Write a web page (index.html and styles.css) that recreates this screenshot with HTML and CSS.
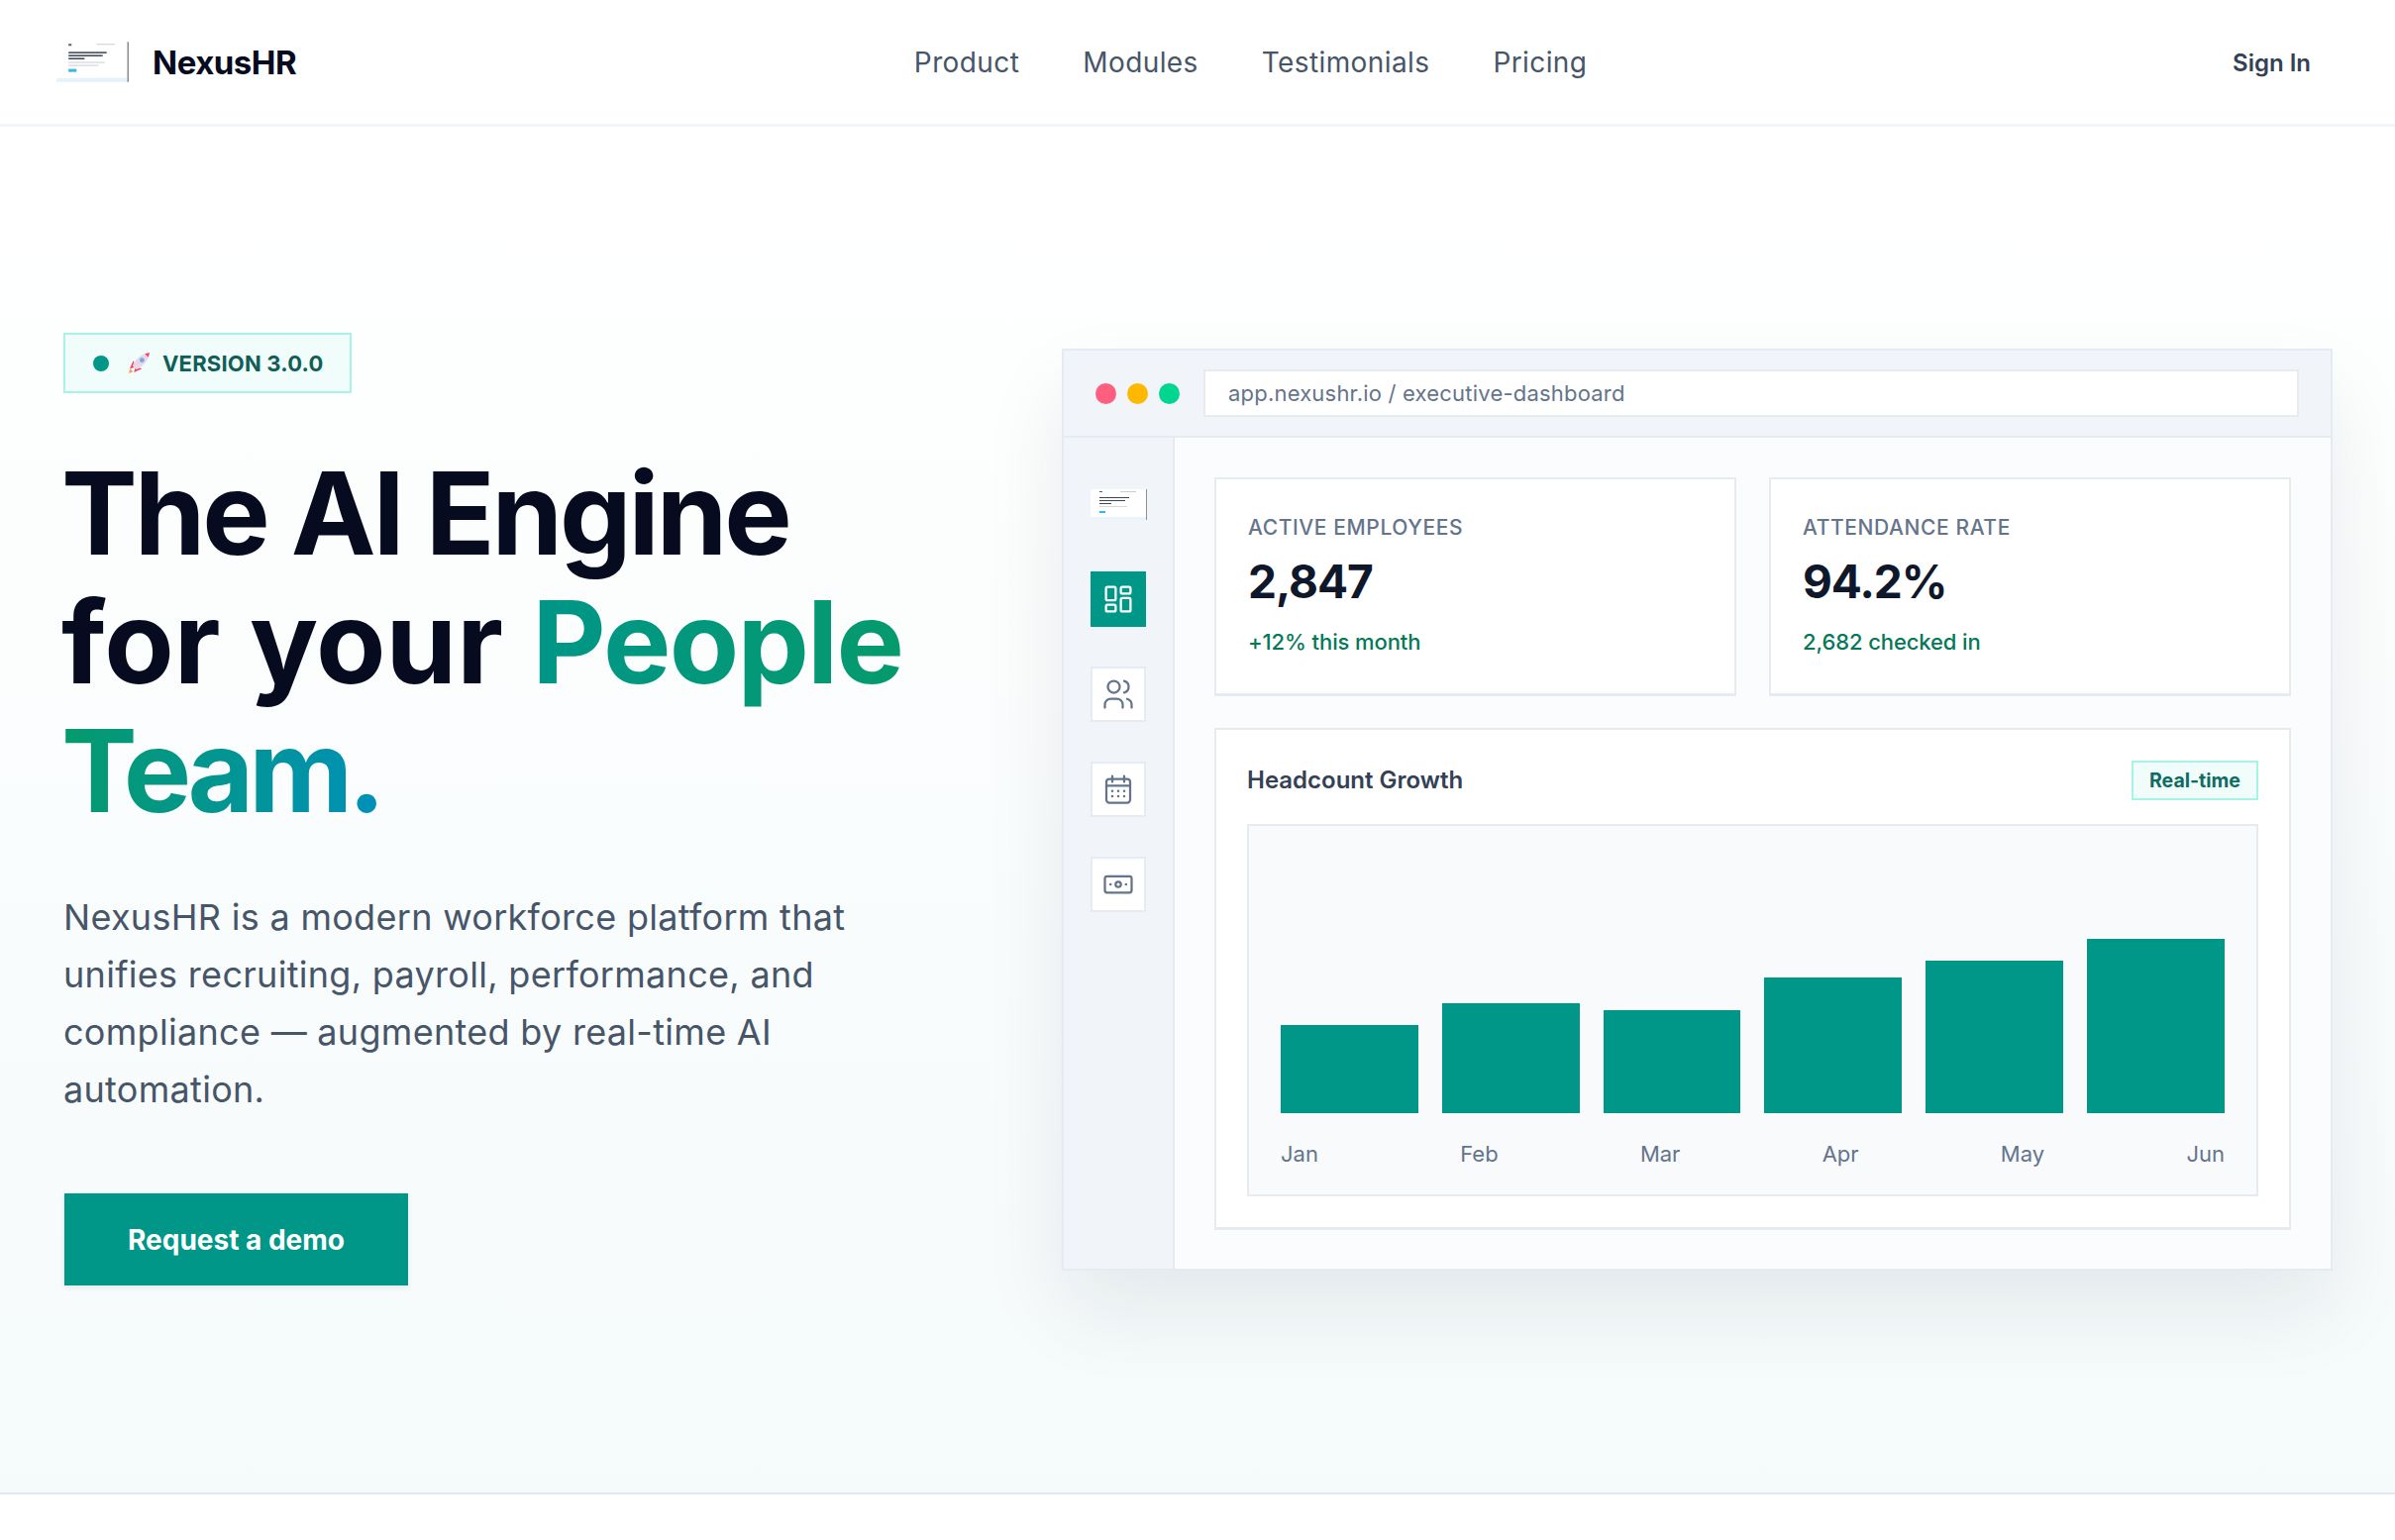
FILE: index.html
```html
<!DOCTYPE html>
<html lang="en">
<head>
    <meta charset="UTF-8">
    <meta name="viewport" content="width=device-width, initial-scale=1.0">
    <title>NexusHR</title>
    <link rel="stylesheet" href="styles.css">
</head>
<body>
    <header class="topbar">
        <a class="brand" href="#">
            <svg class="thumb thumb-nav" viewBox="0 0 72 40" aria-hidden="true">
                <rect width="72" height="40" fill="#fff"/>
                <rect y="36" width="71" height="4" fill="#e6f3fa"/>
                <rect x="70.500" width="1.500" height="40" fill="#8c8f94"/>
                <rect x="12" y="2" width="3" height="2" fill="#56606e"/>
                <rect x="40" y="2" width="18" height="1" fill="#c9cdd3"/>
                <rect x="12" y="10" width="38" height="1.500" fill="#3c4658"/>
                <rect x="12" y="13" width="34" height="1.500" fill="#3c4658"/>
                <rect x="12" y="16" width="16" height="1.500" fill="#3c4658"/>
                <rect x="12" y="20" width="36" height="1" fill="#c9cdd3"/>
                <rect x="12" y="23" width="30" height="1" fill="#c9cdd3"/>
                <rect x="12" y="27" width="8" height="3" fill="#38b6e8"/>
            </svg>
            <span class="brand-name">NexusHR</span>
        </a>
        <nav class="nav-links">
            <a href="#">Product</a>
            <a href="#">Modules</a>
            <a href="#">Testimonials</a>
            <a href="#">Pricing</a>
        </nav>
        <a class="sign-in" href="#">Sign In</a>
    </header>

    <section class="hero">
        <div class="hero-copy">
            <div class="badge">
                <span class="badge-dot"></span>
                <svg class="rocket" viewBox="0 0 24 24" aria-hidden="true">
                    <path d="M1 23l1.500-5 3 3z" fill="#f59e42"/>
                    <path d="M6 9.500L2 18l6-1.500z" fill="#f43f6e"/>
                    <path d="M15 18l-8.500 4 1.500-6z" fill="#f43f6e"/>
                    <path d="M5 15C8 8 14 3 20 2l2 2c-1 6-6 12-13 15z" fill="#e6d8e6"/>
                    <path d="M18 2.300l5-1.300-1.300 5z" fill="#f43f6e"/>
                    <circle cx="15" cy="9" r="2.500" fill="#7aa7e8"/>
                </svg>
                <span class="badge-text">VERSION 3.0.0</span>
            </div>
            <h1 class="headline">
                The AI Engine<br>
                <span class="line-two">for your <span class="people">People</span></span><br>
                <span class="team">Team.</span>
            </h1>
            <p class="lead">NexusHR is a modern workforce platform that unifies recruiting, payroll, performance, and compliance — augmented by real-time AI automation.</p>
            <a class="cta" href="#">Request a demo</a>
        </div>

        <div class="window">
            <div class="window-bar">
                <span class="light light-red"></span>
                <span class="light light-amber"></span>
                <span class="light light-green"></span>
                <div class="address">app.nexushr.io / executive-dashboard</div>
            </div>
            <div class="window-body">
                <aside class="side">
                    <svg class="thumb thumb-side" viewBox="0 0 57 31" aria-hidden="true">
                        <rect width="57" height="31" fill="#fff"/>
                        <rect y="28" width="56" height="3" fill="#eaf4fa"/>
                        <rect x="56" width="1" height="31" fill="#8c8f94"/>
                        <rect x="9" y="2" width="3" height="1" fill="#56606e"/>
                        <rect x="30" y="2" width="16" height="1" fill="#c9cdd3"/>
                        <rect x="9" y="8" width="30" height="1" fill="#3c4658"/>
                        <rect x="9" y="11" width="26" height="1" fill="#3c4658"/>
                        <rect x="9" y="14" width="12" height="1" fill="#3c4658"/>
                        <rect x="9" y="17" width="28" height="1" fill="#d5d8dd"/>
                        <rect x="9" y="22" width="6" height="2" fill="#38b6e8"/>
                    </svg>
                    <div class="side-item side-active">
                        <svg viewBox="0 0 24 24" fill="none" stroke="currentColor" stroke-width="1.500" stroke-linejoin="round"><rect x="3.750" y="3.750" width="6.500" height="9" rx="1"/><rect x="13.750" y="3.750" width="6.500" height="4.500" rx="1"/><rect x="13.750" y="11.250" width="6.500" height="9" rx="1"/><rect x="3.750" y="15.750" width="6.500" height="4.500" rx="1"/></svg>
                    </div>
                    <div class="side-item">
                        <svg viewBox="0 0 24 24" fill="none" stroke="currentColor" stroke-width="1.500" stroke-linecap="round" stroke-linejoin="round"><circle cx="9" cy="7" r="4"/><path d="M3 21v-2a4 4 0 0 1 4-4h4a4 4 0 0 1 4 4v2"/><path d="M16 3.130a4 4 0 0 1 0 7.750"/><path d="M21 21v-2a4 4 0 0 0-3-3.850"/></svg>
                    </div>
                    <div class="side-item">
                        <svg viewBox="0 0 24 24" fill="none" stroke="currentColor" stroke-width="1.500" stroke-linecap="round" stroke-linejoin="round"><rect x="4" y="5" width="16" height="16" rx="2"/><path d="M4 9.500h16M8 3v4M16 3v4"/><path d="M8 13.200h.01M12 13.200h.01M16 13.200h.01M8 16.700h.01M12 16.700h.01M16 16.700h.01" stroke-width="1.700"/></svg>
                    </div>
                    <div class="side-item">
                        <svg viewBox="0 0 24 24" fill="none" stroke="currentColor" stroke-width="1.500" stroke-linecap="round" stroke-linejoin="round"><rect x="3" y="6.500" width="18" height="11" rx="1.500"/><circle cx="12" cy="12" r="1.800"/><path d="M6.800 12h.01M17.200 12h.01" stroke-width="1.700"/></svg>
                    </div>
                </aside>
                <main class="board">
                    <div class="stats">
                        <div class="stat">
                            <div class="stat-label">ACTIVE EMPLOYEES</div>
                            <div class="stat-value">2,847</div>
                            <div class="stat-note">+12% this month</div>
                        </div>
                        <div class="stat">
                            <div class="stat-label">ATTENDANCE RATE</div>
                            <div class="stat-value">94.2%</div>
                            <div class="stat-note">2,682 checked in</div>
                        </div>
                    </div>
                    <div class="chart-card">
                        <div class="chart-head">
                            <div class="chart-title">Headcount Growth</div>
                            <div class="tag">Real-time</div>
                        </div>
                        <div class="chart">
                            <div class="bars">
                                <div class="bar" style="height: 89px"></div>
                                <div class="bar" style="height: 111px"></div>
                                <div class="bar" style="height: 104px"></div>
                                <div class="bar" style="height: 137px"></div>
                                <div class="bar" style="height: 154px"></div>
                                <div class="bar" style="height: 176px"></div>
                            </div>
                            <div class="months">
                                <span>Jan</span><span>Feb</span><span>Mar</span><span>Apr</span><span>May</span><span>Jun</span>
                            </div>
                        </div>
                    </div>
                </main>
            </div>
        </div>
    </section>
    <div class="page-end"></div>
</body>
</html>
```

FILE: styles.css
```css
* {
    box-sizing: border-box;
}
body {
    margin: 0;
    font-family: Inter, "Noto Sans", Arial, sans-serif;
    background-color: #fff;
    color: #0f172a;
}
a {
    text-decoration: none;
    color: inherit;
}
svg {
    display: block;
    flex-shrink: 0;
}

/* top bar */
.topbar {
    height: 128px;
    padding: 0 85px 0 57px;
    display: flex;
    align-items: center;
    justify-content: space-between;
    background-color: #fff;
    border-bottom: 3px solid #f1f4f8;
}
.brand {
    display: flex;
    align-items: center;
    gap: 24px;
}
.thumb-nav {
    width: 73px;
    height: 41px;
}
.brand-name {
    font-size: 33px;
    font-weight: 700;
    letter-spacing: -0.5px;
    color: #060b1f;
}
.nav-links {
    display: flex;
    gap: 64px;
    font-size: 28px;
    letter-spacing: 0.4px;
    color: #475569;
}
.sign-in {
    padding: 2px 0 0 28px;
    font-size: 24px;
    font-weight: 600;
    color: #334155;
}

/* hero */
.hero {
    height: 1381px;
    padding: 208px 63px 0 64px;
    display: grid;
    grid-template-columns: 1fr 1283px;
    align-items: start;
    background: linear-gradient(180deg, #fff 0%, #f5fafb 100%);
    border-bottom: 2px solid #e2e8f0;
}
.hero-copy {
    min-width: 0;
}
.badge {
    width: 291px;
    height: 61px;
    padding-left: 28px;
    display: flex;
    align-items: center;
    background-color: #f0fdfa;
    border: 2px solid #a7f3e4;
}
.badge-dot {
    width: 16px;
    height: 16px;
    flex-shrink: 0;
    border-radius: 50%;
    background-color: #009688;
}
.rocket {
    width: 23px;
    height: 23px;
    margin-left: 19px;
}
.badge-text {
    margin-left: 12px;
    font-size: 22px;
    font-weight: 700;
    letter-spacing: 0.2px;
    white-space: nowrap;
    color: #115e59;
}
.headline {
    margin: 57px 0 0 -2px;
    font-size: 115px;
    line-height: 130px;
    font-weight: 700;
    letter-spacing: -3.1px;
    white-space: nowrap;
    color: #060b1f;
}
.line-two {
    letter-spacing: 0;
    word-spacing: 2px;
}
.people,
.team {
    -webkit-background-clip: text;
    background-clip: text;
    color: transparent;
}
.people {
    letter-spacing: -1.8px;
    background-image: linear-gradient(90deg, #009688 0%, #059a6c 100%);
}
.team {
    letter-spacing: -5px;
    background-image: linear-gradient(90deg, #059a6c 0%, #0090b8 100%);
}
.lead {
    width: 830px;
    margin: 53px 0 0;
    font-size: 36px;
    line-height: 58px;
    letter-spacing: 0.3px;
    color: #475569;
}
.cta {
    width: 347px;
    height: 93px;
    margin-top: 76px;
    margin-left: 1px;
    display: flex;
    align-items: center;
    justify-content: center;
    font-size: 28px;
    font-weight: 700;
    color: #fff;
    background-color: #009688;
    box-shadow: 0 2px 6px rgba(15, 23, 42, 0.08);
}

/* app window */
.window {
    height: 931px;
    margin-top: 16px;
    display: flex;
    flex-direction: column;
    background-color: #fbfcfe;
    border: 2px solid #e6ebf2;
    box-shadow: 0 40px 80px rgba(15, 23, 42, 0.08);
}
.window-bar {
    height: 88px;
    padding: 0 32px;
    display: flex;
    align-items: center;
    gap: 11px;
    background-color: #f1f5f9;
    border-bottom: 2px solid #e6ebf2;
}
.light {
    width: 21px;
    height: 21px;
    border-radius: 50%;
}
.light-red {
    background-color: #ff5f7e;
}
.light-amber {
    background-color: #ffb800;
}
.light-green {
    background-color: #00d68f;
}
.address {
    flex: 1;
    height: 48px;
    margin-left: 13px;
    padding-left: 23px;
    display: flex;
    align-items: center;
    font-size: 22px;
    letter-spacing: 0.2px;
    color: #64748b;
    background-color: #fff;
    border: 2px solid #e6ebf2;
}
.window-body {
    flex: 1;
    display: flex;
}
.side {
    width: 112px;
    padding-top: 52px;
    display: flex;
    flex-direction: column;
    align-items: center;
    gap: 40px;
    background-color: #f1f5f9;
    border-right: 2px solid #e6ebf2;
}
.thumb-side {
    width: 57px;
    height: 31px;
    margin-bottom: 12px;
}
.side-item {
    width: 56px;
    height: 56px;
    display: flex;
    align-items: center;
    justify-content: center;
    color: #64748b;
    background-color: #fff;
    border: 2px solid #e6ebf2;
}
.side-item svg {
    width: 36px;
    height: 36px;
}
.side-active {
    color: #fff;
    background-color: #009688;
    border-color: #009688;
}
.board {
    flex: 1;
    padding: 40px 40px 0;
    display: flex;
    flex-direction: column;
    gap: 32px;
}
.stats {
    display: grid;
    grid-template-columns: 1fr 1fr;
    gap: 33px;
}
.stat {
    height: 221px;
    padding: 36px 32px 0;
    background-color: #fff;
    border: 2px solid #e6ebf2;
    border-bottom-width: 3px;
}
.stat-label {
    font-size: 21px;
    font-weight: 500;
    letter-spacing: 0.6px;
    color: #64748b;
}
.stat-value {
    margin-top: 12px;
    font-size: 46px;
    line-height: 60px;
    font-weight: 700;
    letter-spacing: -1px;
    color: #0f172a;
}
.stat-note {
    margin-top: 18px;
    font-size: 22px;
    font-weight: 500;
    letter-spacing: -0.1px;
    color: #047857;
}
.chart-card {
    height: 507px;
    padding: 31px;
    display: flex;
    flex-direction: column;
    background-color: #fff;
    border: 2px solid #e6ebf2;
    border-bottom-width: 3px;
}
.chart-head {
    height: 40px;
    display: flex;
    align-items: center;
    justify-content: space-between;
}
.chart-title {
    padding-bottom: 2px;
    font-size: 24px;
    font-weight: 600;
    color: #334155;
}
.tag {
    width: 128px;
    height: 40px;
    display: flex;
    align-items: center;
    justify-content: center;
    font-size: 19.5px;
    font-weight: 700;
    color: #0f6b63;
    background-color: #f0fdfa;
    border: 2px solid #a7f3e4;
}
.chart {
    flex: 1;
    margin-top: 24px;
    padding: 0 32px;
    display: flex;
    flex-direction: column;
    background-color: #f8fafc;
    border: 2px solid #e6ebf2;
}
.bars {
    height: 290px;
    display: flex;
    align-items: flex-end;
    gap: 24px;
}
.bar {
    flex: 1;
    background-color: #009688;
}
.months {
    margin-top: 28px;
    display: flex;
    justify-content: space-between;
    font-size: 22px;
    color: #64748b;
}
.page-end {
    height: 46px;
    background-color: #fff;
}
```
